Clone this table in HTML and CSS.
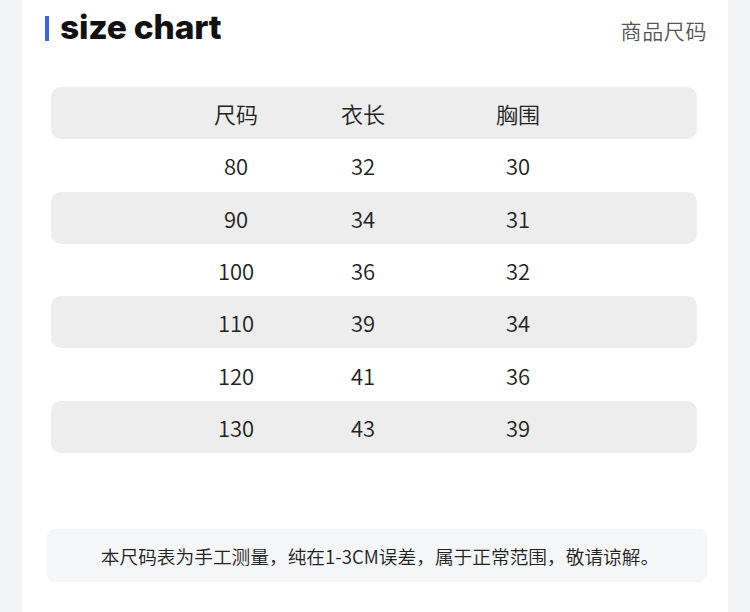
FILE: index.html
```html
<!DOCTYPE html>
<html lang="zh">
<head>
<meta charset="utf-8">
<link rel="stylesheet" href="styles.css">
</head>
<body>
<div class="page">
  <div class="card">
    <div class="head">
      <div class="title"><span class="bar"></span><span class="title-text">size chart</span></div>
      <div class="sub">商品尺码</div>
    </div>
    <div class="table">
      <div class="row shade"><span></span><span>尺码</span><span>衣长</span><span>胸围</span></div>
      <div class="row"><span></span><span>80</span><span>32</span><span>30</span></div>
      <div class="row shade"><span></span><span>90</span><span>34</span><span>31</span></div>
      <div class="row"><span></span><span>100</span><span>36</span><span>32</span></div>
      <div class="row shade"><span></span><span>110</span><span>39</span><span>34</span></div>
      <div class="row"><span></span><span>120</span><span>41</span><span>36</span></div>
      <div class="row shade"><span></span><span>130</span><span>43</span><span>39</span></div>
    </div>
    <div class="note">本尺码表为手工测量，纯在1-3CM误差，属于正常范围，敬请谅解。</div>
  </div>
</div>
</body>
</html>
```
FILE: styles.css
```css
html, body { margin: 0; padding: 0; }
body {
  width: 750px;
  height: 612px;
  overflow: hidden;
  background: #f3f4f6;
  font-family: "Noto Sans CJK SC", "Noto Sans", sans-serif;
}
.page {
  display: flex;
  padding: 0 22px 0 22px;
  height: 612px;
}
.card {
  background: #fff;
  width: 706px;
  height: 612px;
}
.head {
  display: flex;
  justify-content: space-between;
  align-items: flex-start;
  padding: 7px 21px 0 23px;
  height: 79px;
  box-sizing: border-box;
}
.title { display: flex; align-items: center; gap: 11px; }
.bar { width: 4px; height: 25px; background: #3f63e6; margin-top: 2px; }
.title-text {
  font-family: "Inter", "Liberation Sans", sans-serif;
  font-weight: 800;
  font-size: 33.5px;
  letter-spacing: -0.2px;
  color: #111;
  line-height: 40px;
}
.sub {
  font-size: 21px;
  font-weight: 350;
  letter-spacing: 0.6px;
  color: #555;
  margin-top: 9px;
  line-height: 28px;
}
.table {
  margin: 8px 31px 0 29px;
}
.row {
  display: grid;
  grid-template-columns: 120px 130px 124px 186px 1fr;
  height: 52.3px;
  align-items: center;
  border-radius: 10px;
  font-size: 22px;
  font-weight: 350;
  color: #222;
  text-align: center;
}
.row.shade { background: #ededed; }
.note {
  margin: 76px 21px 0 25px;
  padding-left: 6px;
  height: 53px;
  background: #f5f6f8;
  border-radius: 8px;
  display: flex;
  align-items: center;
  justify-content: center;
  font-size: 18.7px;
  font-weight: 350;
  color: #222;
}
```
